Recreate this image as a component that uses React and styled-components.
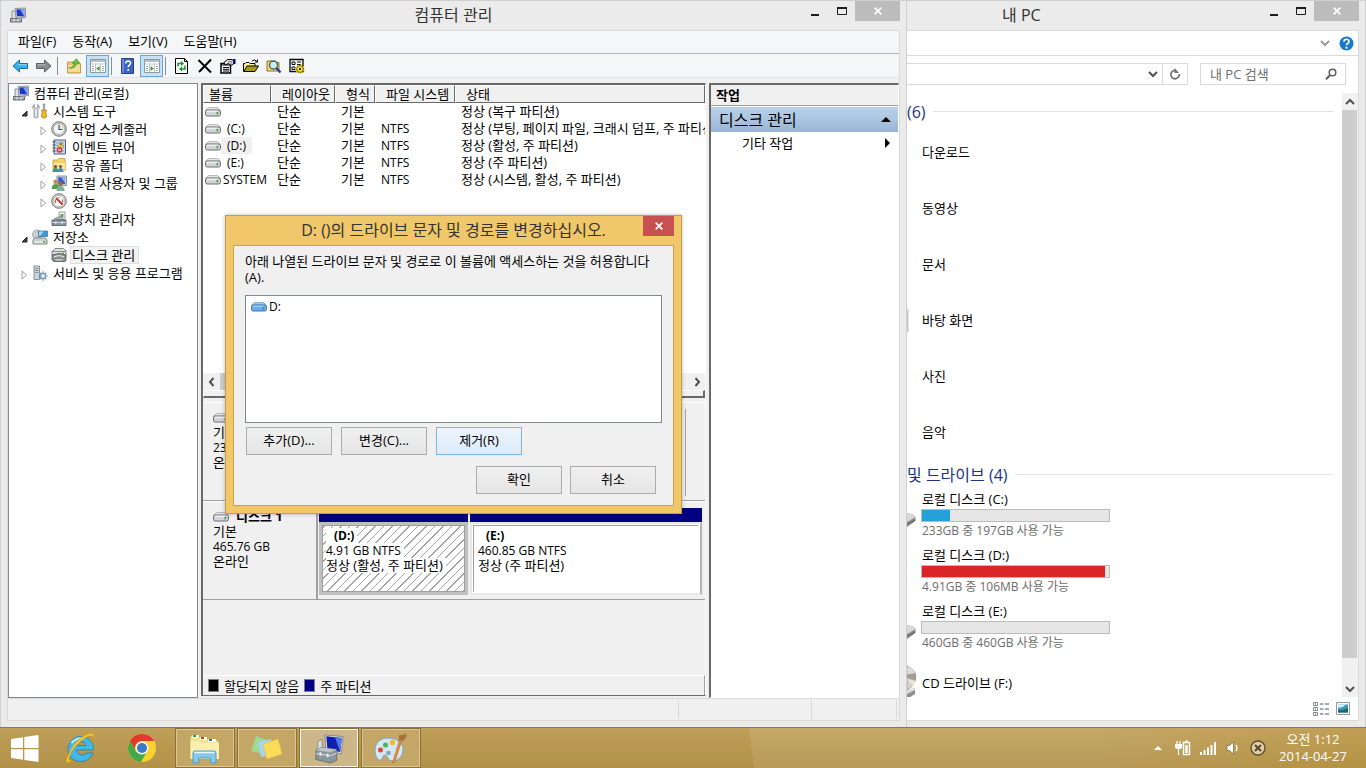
import React from "react";
import styled, { createGlobalStyle, css } from "styled-components";

const GlobalStyle = createGlobalStyle`
  * {
    box-sizing: border-box;
  }

  body {
    margin: 0;
    font-family: "Open Sans", "Noto Sans CJK KR", sans-serif;
    font-size: 13px;
    line-height: 18px;
    color: #000;
    background: #ebebeb;
  }

  button,
  input {
    margin: 0;
    padding: 0;
    border: none;
    background: none;
    font: inherit;
    color: inherit;
  }

  h1, h2, p, ul {
    margin: 0;
    padding: 0;
    font-weight: 400;
    font-size: inherit;
  }

  ul {
    list-style: none;
  }
`;

const Screen = styled.div`
  display: flex;
  flex-direction: column;
  height: 100vh;
  overflow: hidden;
`;

const Desktop = styled.main`
  position: relative;
  flex: 1;
  min-height: 0;
  display: grid;
  grid-template-columns: 907fr 459fr;
`;

/* ---------- window frame ---------- */

const Window = styled.section`
  display: flex;
  flex-direction: column;
  min-width: 0;
  min-height: 0;
  overflow: hidden;
  padding: 0 6px 6px ${(props) => (props.$behind ? "0" : "6px")};
  border: 1px solid #d0d0d0;
  border-bottom: none;
  border-left-width: ${(props) => (props.$behind ? "0" : "1px")};
  background: #ebebeb;
`;

const TitleBar = styled.header`
  flex: none;
  display: grid;
  grid-template-columns: 1fr auto 1fr;
  height: 29px;
`;

const BehindTitleBar = styled(TitleBar)`
  grid-template-columns: auto 1fr;
  padding-left: 95px;
`;

const TitleIcon = styled.div`
  padding: 6px 0 0 3px;
`;

const WindowTitle = styled.h1`
  font-size: 16px;
  line-height: 28px;
  color: #333;
  white-space: nowrap;
`;

const Controls = styled.div`
  display: flex;
  justify-content: flex-end;
  align-items: flex-start;
`;

const ControlButton = styled.button`
  width: ${(props) => (props.$close ? "45px" : "27px")};
  height: 20px;
  display: flex;
  align-items: center;
  justify-content: center;
  background: ${(props) => (props.$close ? "#bcbcbc" : "transparent")};
`;

const Client = styled.div`
  flex: 1;
  min-height: 0;
  display: flex;
  flex-direction: column;
  border: 1px solid #dadada;
  border-left-width: ${(props) => (props.$behind ? "0" : "1px")};
  background: ${(props) => (props.$behind ? "#fff" : "#f0f0f0")};
`;

/* ---------- menu and toolbar ---------- */

const MenuBar = styled.nav`
  flex: none;
  display: flex;
  gap: 16px;
  height: 23px;
  padding: 0 10px;
  border-bottom: 1px solid #b2b4b7;
  background: #f5f6f7;
`;

const MenuItem = styled.button`
  font-size: 13px;
  line-height: 20px;
  padding-bottom: 2px;
`;

const Toolbar = styled.div`
  flex: none;
  display: flex;
  align-items: center;
  height: 24px;
  padding: 1px 0 0 1px;
  border-bottom: 1px solid #e4e4e4;
  background: #f5f6f7;
`;

const ToolButton = styled.button`
  width: 23px;
  height: 22px;
  display: flex;
  align-items: center;
  justify-content: center;
  ${(props) =>
    props.$active &&
    css`
      margin-left: 1px;
      border: 1px solid #6ba5d9;
      background: #c6e0f6;
    `}
`;

const ToolSeparator = styled.span`
  width: 1px;
  height: 18px;
  margin: 0 4px 0 2px;
  background: #8c8c8c;
`;

/* ---------- panes ---------- */

const Panes = styled.div`
  flex: 1;
  min-height: 0;
  display: grid;
  grid-template-columns: 190px minmax(0, 1fr) 190px;
  gap: 3px;
  padding-top: 5px;
`;

const TreePane = styled.ul`
  border: 1px solid #828790;
  background: #fff;
`;

const TreeRow = styled.li`
  display: flex;
  align-items: center;
  height: 18px;
  padding-left: ${(props) => [4, 10, 29][props.$level]}px;
  white-space: nowrap;
`;

const Expander = styled.button`
  width: 10px;
  height: 10px;
  margin: 3px 3px 0 0;
  display: flex;
`;

const TreeLabel = styled.span`
  margin-left: 4px;
  padding: 0 3px 0 1px;
  line-height: 16px;
  ${(props) =>
    props.$selected &&
    css`
      background: #f2f2f2;
      outline: 1px solid #dedede;
    `}
`;

const CenterPane = styled.div`
  min-height: 0;
  display: flex;
  flex-direction: column;
  border: 2px solid #696969;
  border-width: 2px 1px 1px 2px;
  border-right-color: #fff;
  margin-bottom: 2px;
`;

const VolumeList = styled.div`
  flex: none;
  height: 288px;
  overflow: hidden;
  background: #fff;
`;

const VolumeTable = styled.table`
  width: 100%;
  table-layout: fixed;
  border-collapse: separate;
  border-spacing: 0;
  white-space: nowrap;
`;

const VolumeHead = styled.th`
  width: ${(props) => props.$width};
  height: 18px;
  padding: 0 0 0 ${(props) => (props.$first ? "5px" : "10px")};
  border: 1px solid #696969;
  border-top-color: #fff;
  border-left-color: #fff;
  background: #f0f0f0;
  font-weight: 400;
  font-size: 13px;
  line-height: 16px;
  text-align: left;
`;

const VolumeCell = styled.td`
  height: 17px;
  padding: 0 0 0 6px;
  overflow: hidden;
  font-size: ${(props) => (props.$latin ? "12px" : "13px")};
  line-height: 17px;
`;

const VolumeName = styled.div`
  display: flex;
  align-items: center;
  height: 17px;
  margin-left: -4px;
  font-size: 12px;
`;

const VolumeTag = styled.span`
  padding: 0 ${(props) => (props.$plain ? "2px" : "6px")};
  background: ${(props) => (props.$selected ? "#f0f0f0" : "transparent")};
`;

const HScroll = styled.div`
  flex: none;
  display: flex;
  height: 17px;
  background: #f0f0f0;
`;

const HThumb = styled.div`
  width: 360px;
  background: #cdcdcd;
`;

const ScrollArrow = styled.button`
  width: ${(props) => (props.$wide ? "16px" : "17px")};
  height: 17px;
  display: flex;
  align-items: center;
  justify-content: center;
  margin-left: ${(props) => (props.$end ? "auto" : "0")};
`;

const Splitter = styled.div`
  flex: none;
  height: 8px;
  border: 1px solid #fff;
  border-width: 1px 2px 2px 1px;
  border-bottom-color: #696969;
  border-right-color: #696969;
  background: #f0f0f0;
`;

const DiskArea = styled.div`
  flex: 1;
  min-height: 0;
  background: #f0f0f0;
`;

const DiskRow = styled.div`
  display: grid;
  grid-template-columns: 115px minmax(0, 1fr);
  height: 99px;
  margin-top: ${(props) => (props.$first ? "4px" : "0")};
  border-top: 1px solid #fff;
  border-bottom: 1px solid #a0a0a0;
`;

const DiskLabel = styled.div`
  padding: 7px 0 0 10px;
  border-right: 2px solid #a0a0a0;
  font-size: 13px;
  line-height: 15px;
`;

const DiskName = styled.strong`
  display: flex;
  align-items: center;
  gap: 7px;
  height: 15px;
`;

const LatinText = styled.div`
  font-size: 12px;
`;

const Partitions = styled.div`
  display: grid;
  grid-template-columns: ${(props) => props.$columns};
  gap: 2px;
  padding: 6px 3px 4px 1px;
`;

const EmptyPartition = styled.div`
  border-right: 1px solid #a0a0a0;
`;

const Partition = styled.div`
  display: flex;
  flex-direction: column;
`;

const PartitionBand = styled.div`
  height: 14px;
  background: #000080;
`;

const PartitionBody = styled.div`
  flex: 1;
  display: flex;
  padding: ${(props) => (props.$selected ? "0" : "1px")};
  border: ${(props) => (props.$selected ? "3px solid #c0c0c0" : "2px solid #e8e8e8")};
  border-right-color: ${(props) => (props.$selected ? "#c0c0c0" : "#b4b4b4")};
  background: #fff;
`;

const PartitionInner = styled.div`
  flex: 1;
  padding: ${(props) => (props.$hatched ? "2px 3px" : "2px 4px")};
  border: 1px solid #a0a0a0;
  border-right-color: ${(props) => (props.$hatched ? "#a0a0a0" : "#fff")};
  border-bottom-color: ${(props) => (props.$hatched ? "#a0a0a0" : "#fff")};
  background: ${(props) =>
    props.$hatched
      ? "repeating-linear-gradient(-45deg, #a4a4a4 0 1px, #fff 1px 6px)"
      : "#fff"};
`;

const PartitionText = styled.div`
  width: max-content;
  padding: 0 3px 0 ${(props) => (props.$name ? "8px" : "0")};
  background: #fff;
  font-size: ${(props) => (props.$latin ? "12px" : "13px")};
  font-weight: ${(props) => (props.$name ? 700 : 400)};
  line-height: 15px;
  white-space: nowrap;
`;

const Legend = styled.div`
  flex: none;
  display: flex;
  align-items: center;
  gap: 5px;
  height: 20px;
  padding-left: 5px;
  border-top: 1px solid #fff;
  border-right: 1px solid #a0a0a0;
  background: #f0f0f0;
`;

const Swatch = styled.span`
  width: 11px;
  height: 13px;
  border: 1px solid #808080;
  background: ${(props) => props.$color};
`;

const ActionPane = styled.aside`
  border: 1px solid #fff;
  border-width: 2px 1px 1px 2px;
  border-top-color: #696969;
  border-left-color: #696969;
  background: #fff;
`;

const ActionHeader = styled.h2`
  height: 21px;
  padding-left: 5px;
  border-bottom: 1px solid #a0a0a0;
  background: #f0f0f0;
  font-weight: 700;
  font-size: 13px;
  line-height: 20px;
`;

const ActionGroup = styled.button`
  width: 100%;
  display: flex;
  align-items: center;
  justify-content: space-between;
  height: 26px;
  padding: 0 7px 0 8px;
  border-top: 1px solid #fff;
  background: linear-gradient(#bad2ea, #9ab5d6);
  font-size: 16px;
  line-height: 24px;
`;

const ActionItem = styled.button`
  width: 100%;
  display: flex;
  align-items: center;
  justify-content: space-between;
  height: 22px;
  padding: 0 8px 0 31px;
`;

const StatusBar = styled.footer`
  flex: none;
  display: grid;
  grid-template-columns: 1fr 133px 85px;
  height: 22px;
  padding: 1px 2px 1px 0;
  border-top: 1px solid #d9d9d9;
`;

const StatusCell = styled.span`
  border-right: 1px solid #d9d9d9;
`;

/* ---------- explorer window ---------- */

const RibbonStrip = styled.div`
  flex: none;
  display: flex;
  align-items: center;
  justify-content: flex-end;
  gap: 9px;
  height: 25px;
  padding-right: 4px;
  border-bottom: 1px solid #dadada;
`;

const RoundButton = styled.button`
  display: flex;
`;

const AddressRow = styled.div`
  flex: none;
  display: flex;
  gap: 12px;
  padding: 7px 12px 8px 0;
`;

const AddressBox = styled.div`
  flex: 1;
  display: flex;
  justify-content: flex-end;
  height: 22px;
  border: 1px solid #d9d9d9;
  border-left: none;
`;

const AddressButton = styled.button`
  width: ${(props) => (props.$divided ? "25px" : "18px")};
  display: flex;
  align-items: center;
  justify-content: center;
  border-left: ${(props) => (props.$divided ? "1px solid #d9d9d9" : "none")};
`;

const SearchBox = styled.label`
  display: flex;
  align-items: center;
  width: 146px;
  height: 22px;
  padding: 0 8px 0 9px;
  border: 1px solid #d9d9d9;
`;

const SearchInput = styled.input`
  flex: 1;
  min-width: 0;
  height: 18px;
  padding-bottom: 1px;
  outline: none;

  &::placeholder {
    color: #6d6d6d;
  }
`;

const Browser = styled.div`
  flex: 1;
  min-height: 0;
  display: flex;
`;

const BrowserList = styled.div`
  flex: 1;
  min-width: 0;
  overflow: hidden;
  padding: 4px 8px 0 0;
`;

const GroupHeader = styled.h2`
  display: flex;
  align-items: center;
  gap: 7px;
  height: 27px;
  padding-top: 2px;
  font-size: 16px;
  line-height: 24px;
  color: #1e3287;
  white-space: nowrap;

  &::after {
    content: "";
    flex: 1;
    height: 1px;
    background: #e2e2e2;
  }
`;

const Entry = styled.div`
  display: grid;
  grid-template-columns: 11px 189px;
  column-gap: 3px;
  align-items: center;
  height: 56px;
`;

const EntryEdge = styled.div`
  display: flex;
  align-items: center;
  height: 56px;
  padding-top: ${(props) => (props.$low ? "10px" : "0")};
`;

const EntryText = styled.div`
  padding-left: 1px;
  line-height: 18px;
  white-space: nowrap;
  color: ${(props) => (props.$muted ? "#6d6d6d" : "#000")};
  font-size: ${(props) => (props.$muted ? "12px" : "13px")};
`;

const DriveName = styled(EntryText)`
  line-height: 16px;
  padding-bottom: 2px;
`;

const UsageTrack = styled.div`
  height: 13px;
  border: 1px solid #bcbcbc;
  background: #e6e6e6;
`;

const UsageFill = styled.div`
  height: 11px;
  background: ${(props) => props.$color};
`;

const VScroll = styled.div`
  flex: none;
  display: flex;
  flex-direction: column;
  width: 16px;
  background: #f0f0f0;
`;

const VThumb = styled.div`
  flex: 1;
  margin-bottom: 22px;
  margin-right: 1px;
  background: #cdcdcd;
`;

const ViewSwitch = styled.div`
  flex: none;
  display: flex;
  align-items: center;
  justify-content: flex-end;
  gap: 7px;
  height: 23px;
  padding-right: 8px;
`;

/* ---------- dialog ---------- */

const DialogFrame = styled.section`
  position: absolute;
  top: 215px;
  left: 225px;
  width: 457px;
  padding: 0 7px 7px;
  border: 1px solid #c29c4b;
  background: #f0c869;
  box-shadow: 0 0 4px rgba(0, 0, 0, 0.25);
`;

const DialogTitleBar = styled.header`
  display: grid;
  grid-template-columns: 31px 1fr 31px;
  height: 29px;
`;

const DialogTitle = styled(WindowTitle)`
  text-align: center;
`;

const DialogClose = styled(ControlButton)`
  width: 31px;
  background: #c75050;
`;

const DialogBody = styled.div`
  padding: 7px 11px 11px;
  border: 1px solid #c6a452;
  background: #f0f0f0;
`;

const DialogMessage = styled.p`
  line-height: 16px;
`;

const PathList = styled.ul`
  height: 128px;
  margin: 10px 0 4px;
  padding: 2px 5px;
  border: 1px solid #828790;
  background: #fff;
`;

const PathItem = styled.li`
  display: flex;
  align-items: center;
  gap: 2px;
  height: 17px;
  font-size: 12px;
`;

const ButtonRow = styled.div`
  display: flex;
  gap: ${(props) => (props.$end ? "8px" : "9px")};
  justify-content: ${(props) => (props.$end ? "flex-end" : "flex-start")};
  padding: 0 ${(props) => (props.$end ? "6px" : "0")} 0 1px;
  margin-bottom: ${(props) => (props.$end ? "0" : "11px")};
`;

const PushButton = styled.button`
  width: 86px;
  height: 28px;
  padding-bottom: 2px;
  border: 1px solid ${(props) => (props.$hot ? "#7eb4ea" : "#acacac")};
  background: ${(props) =>
    props.$hot
      ? "linear-gradient(#ecf4fc, #dcecfc)"
      : "linear-gradient(#f0f0f0, #e5e5e5)"};
`;

/* ---------- taskbar ---------- */

const Taskbar = styled.footer`
  flex: none;
  display: flex;
  align-items: stretch;
  height: 41px;
  border-top: 1px solid #957837;
  background:
    linear-gradient(rgba(255, 255, 255, 0.08), rgba(0, 0, 0, 0.04)),
    linear-gradient(83deg, #b9974a 0 55%, #c0a05a 55% 80%, #bb9746 100%);
`;

const PinnedButton = styled.button`
  width: 62px;
  display: flex;
  align-items: center;
  justify-content: center;
`;

const StartButton = styled(PinnedButton)`
  width: 49px;
`;

const TaskButton = styled(PinnedButton)`
  width: 60px;
  margin-left: 2px;
  border: 1px solid #8c7136;
  background: ${(props) => (props.$active ? "#cdb788" : "#c4a667")};
  box-shadow: inset 0 0 0 1px ${(props) => (props.$active ? "#fdf8ea" : "#dcc794")};
`;

const Tray = styled.div`
  display: flex;
  align-items: center;
  margin-left: auto;
`;

const TrayButton = styled.button`
  width: 25px;
  height: 24px;
  display: flex;
  align-items: center;
  justify-content: center;
`;

const Clock = styled.time`
  width: 96px;
  padding-right: 10px;
  color: #fff;
  line-height: 17px;
  text-align: center;
`;

/* ---------- icons ---------- */

const Svg = ({ size = 16, width, height, box = 16, children }) => (
  <svg
    width={width || size}
    height={height || size}
    viewBox={typeof box === "string" ? box : `0 0 ${box} ${box}`}
    aria-hidden="true"
  >
    {children}
  </svg>
);

const ComputerIcon = () => (
  <Svg>
    <path d="M2 4h4v8H2z" fill="#dfe3e6" stroke="#767c80" strokeWidth=".8" />
    <path d="M5 1.500 15.500 1v9.500L6 10z" fill="#d8dce0" stroke="#7d8388" strokeWidth=".8" />
    <path d="M6.300 2.600 14.300 2v7.400L7 9z" fill="#1f36c8" />
    <path d="M10 2.400 14.300 2v7.400z" fill="#7fa5f2" />
    <path d="M.5 11.500h11v3.500H.5z" fill="#8d979e" stroke="#4d565c" strokeWidth=".8" />
    <path d="M1 13h10M4 11.500v3.500M8 11.500v3.500" stroke="#e5eaed" strokeWidth=".8" />
    <path d="M9 10.500h4v1.500H9z" fill="#9ba1a6" />
  </Svg>
);

const ToolsIcon = () => (
  <Svg>
    <path d="M2.300 1.500v3l1.700 1 1.700-1v-3c2 1 2 4 .2 5V14q-1.900 2-3.800 0V6.500c-1.800-1-1.800-4 .2-5z" fill="#e6e8ea" stroke="#777" strokeWidth=".8" />
    <path d="M11 1h2l-.5 6h-1z" fill="#b4b8bc" stroke="#777" strokeWidth=".5" />
    <path d="M9.500 7h5l-.6 2 .6 5q-2.500 2.500-5 0l.6-5z" fill="#f3b71f" stroke="#a97708" strokeWidth=".7" />
  </Svg>
);

const ClockIcon = () => (
  <Svg>
    <circle cx="8" cy="8" r="7.300" fill="#c8c8c8" stroke="#6e6e6e" strokeWidth=".9" />
    <circle cx="8" cy="8" r="5.500" fill="#f1f5fa" stroke="#9a9a9a" strokeWidth=".6" />
    <path d="M8 8V3a5 5 0 0 1 5 5z" fill="#f4dd9d" opacity=".7" />
    <path d="M8 3.800V8.500h3.600" fill="none" stroke="#375e8c" strokeWidth="1.200" />
  </Svg>
);

const EventIcon = () => (
  <Svg>
    <path d="M3 1h11.500v14H3z" fill="#c7d8f0" stroke="#4b5f92" />
    <path d="M5 4h8M5 6.500h8M5 9h8M5 12h8" stroke="#6483bd" strokeWidth=".7" />
    <path d="M1.500 3h3M1.500 6h3M1.500 9h3M1.500 12h3" stroke="#444" />
    <path d="m10 2.500 3 5H7z" fill="#fbd22e" stroke="#bc8d00" strokeWidth=".5" />
    <path d="M10 4.200v2" stroke="#222" />
    <circle cx="8.500" cy="11" r="2.800" fill="#e4382d" />
    <path d="m7.500 10 2 2m0-2-2 2" stroke="#fff" strokeWidth=".9" />
  </Svg>
);

const SharedFolderIcon = () => (
  <Svg>
    <path d="M2 3h5l1-1.500h6V13H2z" fill="#f7d76d" stroke="#c79b29" strokeWidth=".8" />
    <path d="M2.500 5h12v8h-12z" fill="#fbe69b" stroke="#d8b04c" strokeWidth=".6" />
    <circle cx="4.500" cy="9.500" r="1.600" fill="#7b4f2b" />
    <path d="M1.500 15q0-4 3-4t3 4z" fill="#3d9a78" />
    <circle cx="9.500" cy="9.500" r="1.600" fill="#8b5a33" />
    <path d="M6.800 15q0-4 2.700-4t3 4z" fill="#418fca" />
  </Svg>
);

const UsersIcon = () => (
  <Svg>
    <path d="M6 1h9.500v9.500H6z" fill="#dbe0e4" stroke="#747b84" strokeWidth=".8" />
    <path d="M7.200 2.200h7v7h-7z" fill="#3358d0" />
    <path d="m10 2.200 4.200 0v6z" fill="#8cb2f4" />
    <circle cx="4.500" cy="6.800" r="2.200" fill="#bf8a57" />
    <path d="M.8 14q0-5 3.800-5t3.800 5z" fill="#559f54" />
    <circle cx="9.500" cy="8.500" r="2.200" fill="#9a6a3d" />
    <path d="M5.600 16q0-5 3.900-5t4.200 5z" fill="#7fae9b" />
  </Svg>
);

const PerformanceIcon = () => (
  <Svg>
    <circle cx="8" cy="8" r="7.300" fill="#d8d8d8" stroke="#6a6a6a" strokeWidth=".9" />
    <circle cx="8" cy="8" r="5.600" fill="#fff" stroke="#888" strokeWidth=".5" />
    <path d="m5 5 6.500 6.500" stroke="#d12b22" strokeWidth="1.800" />
    <path d="M4.300 10V6.500M8 5V3.700m3.700 5.700V6.500" stroke="#c5342a" />
  </Svg>
);

const DeviceIcon = () => (
  <Svg>
    <path d="M8 1h6v9H8z" fill="#f2f4f5" stroke="#868c90" strokeWidth=".8" />
    <path d="M9.500 3h3v3h-3z" fill="#5aa853" />
    <path d="m3 8 4-2h4l2 3z" fill="#b6bec5" stroke="#6b7378" strokeWidth=".7" />
    <path d="M1 9h14v5.500H1z" fill="#8794a0" stroke="#4f5c66" strokeWidth=".8" />
    <path d="M1 11.500h14" stroke="#dce3e8" strokeWidth=".8" />
    <path d="M4 10.500h1.500v2H4zm6.500 0H12v2h-1.500z" fill="#eef1f3" />
  </Svg>
);

const StorageIcon = () => (
  <Svg>
    <circle cx="5" cy="5.500" r="4.500" fill="#ced3d6" stroke="#858b8f" strokeWidth=".7" />
    <circle cx="5" cy="5.500" r="1.300" fill="#fff" stroke="#858b8f" strokeWidth=".5" />
    <path d="M6.500 2h9v5.500h-9z" fill="#2c9ddb" stroke="#4b6f85" strokeWidth=".7" />
    <path d="M7 2.500h5l-4 4.500H7z" fill="#9fdaf5" />
    <path d="M2.500 9h11l1.500 2v4H1v-4z" fill="#e3e5e7" stroke="#5e6568" strokeWidth=".8" />
    <path d="M1 11h14" stroke="#9aa0a3" strokeWidth=".6" />
    <path d="M11 12h2.500v1.500H11z" fill="#42b02c" />
  </Svg>
);

const DiskManageIcon = () => (
  <Svg>
    <path d="m2 4 2-2.500h8.500L15 4v4.500H1V4z" fill="#dedfdf" stroke="#6b6d6e" strokeWidth=".8" />
    <path d="M1 4.500h14" stroke="#8b8d8e" />
    <path d="M1 8q7-3 14 0v5.500q-2 2-4 1H3q-2-1-2-2z" fill="#8b8d8e" stroke="#505253" strokeWidth=".8" />
    <path d="M3 10q5-2.500 10 0" fill="none" stroke="#ececec" strokeWidth="1.200" />
    <path d="M4.500 12h7v1.800h-7z" fill="#c5c8c8" />
    <path d="M11 5.500h2v1.500h-2z" fill="#4bbc3c" />
  </Svg>
);

const ServicesIcon = () => (
  <Svg>
    <path d="M2 1h5.500v13.500H2z" fill="#ccd5da" stroke="#6f7c84" strokeWidth=".8" />
    <path d="M3.300 3.500h3M3.300 5.500h3M3.300 7.500h3" stroke="#6a7a85" strokeWidth=".8" />
    <circle cx="11" cy="11" r="3" fill="#a9c9e4" stroke="#7397b6" />
    <path d="M11 6.300v2m0 5.400v2m-4.700-4.700h2m5.400 0h2M7.700 7.700l1.400 1.400m3.800 3.800 1.400 1.400m0-6.600-1.400 1.400m-3.800 3.800-1.400 1.400" stroke="#7397b6" strokeWidth="1.200" />
    <circle cx="11" cy="11" r="1.200" fill="#fff" />
  </Svg>
);

const DriveIcon = ({ blue }) => (
  <Svg width={16} height={10} box="0 0 16 10">
    <path d="M3.500.6h9L15.400 3.200H.6z" fill={blue ? "#a4cdf3" : "#ececec"} stroke={blue ? "#5d94cc" : "#9b9b9b"} strokeWidth=".7" />
    <rect x=".5" y="3" width="15" height="6" rx="1.800" fill={blue ? "#6caae4" : "#d3d3da"} stroke={blue ? "#3f7ab5" : "#6e6e74"} />
    <path d="M2 4.200h11" stroke={blue ? "#b8daf8" : "#fff"} />
    <path d="M11.500 4.800h1.700v2.500h-1.700z" fill={blue ? "#2b9b8e" : "#3fa32f"} />
  </Svg>
);

const ArrowIcon = ({ forward }) => (
  <Svg width={17} height={14} box="0 0 17 14">
    <path
      d={forward ? "M16 7 9.500 1v3.500H1.500v5h8V13z" : "M1 7l6.500-6v3.500h8v5h-8V13z"}
      fill={forward ? "#8c8c8c" : "#3aaeea"}
      stroke={forward ? "#5f5f5f" : "#1c6ea8"}
      strokeWidth="1"
    />
    <path d={forward ? "M2.500 5.800h8" : "M6 5.800h8.500"} stroke={forward ? "#b9b9b9" : "#9be0fb"} />
  </Svg>
);

const UpFolderIcon = () => (
  <Svg>
    <path d="M1.500 4h5l1 1.500h7V15h-13z" fill="#edc774" stroke="#b78b34" strokeWidth=".8" />
    <path d="M2.500 7h11.500v7H2.500z" fill="#f5dc9b" />
    <path d="M3 10q4 0 5.500-5H6L10.500.8 13.500 5H11Q9.500 11 3 10z" fill="#67c93c" stroke="#3b8e1a" strokeWidth=".6" />
  </Svg>
);

const PaneIcon = ({ right }) => (
  <Svg>
    <path d="M.5 1.500h15v13H.5z" fill="#fff" stroke="#8f979f" />
    <path d="M1 2h14v2H1z" fill="#b4bfca" />
    <path d="M1 6h14M10.500 6.500v8M5.500 6.500v8" stroke="#a9b2bb" strokeWidth=".8" />
    <path d="M2 8.500h2M2 10.500h2M2 12.500h2M12 8.500h2M12 10.500h2M12 12.500h2" stroke="#7f93a8" strokeWidth=".8" />
    <path d={right ? "M6.500 8 10 10.500 6.500 13z" : "M9.700 8 6.200 10.500 9.700 13z"} fill="#3ea32c" />
  </Svg>
);

const HelpBookIcon = () => (
  <Svg width={13} height={16} box="0 0 13 16">
    <path d="M.5.500h12v15H.5z" fill="#3c62c8" stroke="#23418f" />
    <path d="M2 1v14" stroke="#93aef0" />
    <path d="M4.800 5.500c0-3.200 5-3.200 4.700-.2-.1 1.500-2.300 1.800-2.300 4" fill="none" stroke="#fff" strokeWidth="1.500" />
    <circle cx="7.200" cy="12" r="1" fill="#fff" />
  </Svg>
);

const RefreshPageIcon = () => (
  <Svg>
    <path d="M1.500.500h9l3 3v12h-12z" fill="#fff" stroke="#000" />
    <path d="M10.500.500v3h3" fill="none" stroke="#000" />
    <path d="M4 8.500v-3h3.500M11 7.500v3.500H7.500" fill="none" stroke="#179428" strokeWidth="1.500" />
    <path d="M7 3v5l3-2.500zM8 8.500v5L5 11z" fill="#179428" />
  </Svg>
);

const DeleteIcon = () => (
  <Svg>
    <path d="M1.500 2 14 14.500M14 1.500 2 14" stroke="#000" strokeWidth="2" />
  </Svg>
);

const PropertiesIcon = () => (
  <Svg>
    <path d="M1 5.500h9.500v9.500H1z" fill="#fff" stroke="#000" strokeWidth="1.500" />
    <path d="M1 7h9M3 9.500h6M3 11.300h6M3 13h6" stroke="#000" />
    <path d="M4 4.500 7.500 1.500H12l3 2.500-2.500 3H10L8.500 5.500 5 7z" fill="#e6e6e6" stroke="#000" />
    <path d="M8 3.500h4M8.500 5h4" stroke="#666" strokeWidth=".7" />
    <path d="M13 1h2.500v5H13z" fill="#101060" />
  </Svg>
);

const OpenFolderIcon = () => (
  <Svg>
    <path d="M.5 13.500V5.500h1.500l1-1h3l1 1h5V8" fill="#f5ee8c" stroke="#000" />
    <path d="M.7 13.500 4 8h11.500l-3.500 5.500z" fill="#a89b1a" stroke="#000" />
    <path d="M9 3q2.500-2.500 5 .5M14.500 1.500V4H12" fill="none" stroke="#000" />
  </Svg>
);

const FindIcon = () => (
  <Svg>
    <path d="M1 3h5l1 1.500h6V13H1z" fill="#efd978" stroke="#8c7519" />
    <circle cx="7.500" cy="7" r="4" fill="#bff0fa" stroke="#555" strokeWidth="1.300" />
    <path d="m10.300 10 4.200 4.500" stroke="#1b3ca3" strokeWidth="2.300" />
  </Svg>
);

const SettingsIcon = () => (
  <Svg>
    <path d="M1 1.500h13v12H1z" fill="#fff" stroke="#000" strokeWidth="1.300" />
    <path d="M3 4h3v2.500H3zM8 4h4M8 6.500h4M3 9h3v2.500H3z" fill="none" stroke="#000" />
    <circle cx="11" cy="11" r="3.500" fill="#f4dc2c" stroke="#4b4200" strokeWidth="1" />
    <circle cx="11" cy="11" r="4" fill="none" stroke="#e2c818" strokeWidth="1.500" strokeDasharray="1.600 1.500" />
    <circle cx="11" cy="11" r="1.100" fill="#000" />
  </Svg>
);

const Triangle = ({ points, width = 10, height = 10, fill = "#000", stroke = "none" }) => (
  <Svg width={width} height={height} box={`0 0 ${width} ${height}`}>
    <polygon points={points} fill={fill} stroke={stroke} />
  </Svg>
);

const Chevron = ({ d, color = "#505050" }) => (
  <Svg size={10} box={10}>
    <path d={d} fill="none" stroke={color} strokeWidth="2" />
  </Svg>
);

const CHEVRONS = {
  left: "M6.500 1 3 5l3.500 4",
  right: "M3.500 1 7 5 3.500 9",
  up: "M1 7l4-4 4 4",
  down: "M1 3l4 4 4-4",
};

const MinimizeGlyph = () => (
  <Svg size={11} box={11}>
    <path d="M2 9h8" stroke="#1c1c1c" strokeWidth="2" />
  </Svg>
);

const MaximizeGlyph = () => (
  <Svg width={11} height={9} box="0 0 11 9">
    <path d="M1.500 0v7.500h9V0" fill="none" stroke="#1c1c1c" />
    <path d="M1 1h10" stroke="#1c1c1c" strokeWidth="2" />
  </Svg>
);

const CloseGlyph = () => (
  <Svg size={8} box={8}>
    <path d="m.7.700 6.600 6.600m0-6.600L.7 7.300" stroke="#fff" strokeWidth="1.700" />
  </Svg>
);

const HelpRoundIcon = () => (
  <Svg size={15} box={15}>
    <circle cx="7.500" cy="7.500" r="7" fill="#1979ca" />
    <path d="M5 5.700c0-3.200 5.300-3.200 5 0-.1 1.700-2.500 1.500-2.500 3.600" fill="none" stroke="#fff" strokeWidth="1.600" />
    <circle cx="7.500" cy="11.700" r="1.100" fill="#fff" />
  </Svg>
);

const ReloadIcon = () => (
  <Svg size={12} box={12}>
    <path d="M7 2.500A4.200 4.200 0 1 0 10.200 6" fill="none" stroke="#707070" strokeWidth="1.700" />
    <path d="M5.500 0v5h4.500z" fill="#707070" />
  </Svg>
);

const MagnifierIcon = () => (
  <Svg size={12} box={12}>
    <circle cx="7.500" cy="4.500" r="3.300" fill="none" stroke="#5c5c5c" strokeWidth="1.500" />
    <path d="M5.200 7 1 11.200" stroke="#5c5c5c" strokeWidth="2" />
  </Svg>
);

const DriveEdge = () => (
  <Svg width={9} height={18} box="0 0 9 18">
    <path d="M0 2 6 3.500 8.500 6v4L0 16z" fill="#8b8b8b" />
    <path d="M0 2 6 3.500 8.500 6 0 11z" fill="#d9d9d9" />
    <path d="M0 13.500 8 9" stroke="#606060" />
  </Svg>
);

const DiscEdge = () => (
  <Svg width={10} height={36} box="0 0 10 36">
    <path d="M0 1a12 13 0 0 1 0 24z" fill="#d5d2d2" stroke="#aaa" />
    <path d="M0 1q8 2 9 11L0 10z" fill="#dedcdc" stroke="#aaa" strokeWidth=".6" />
    <path d="M0 9.500 9 8v8L0 13z" fill="#a39d98" />
    <path d="m0 14 9 2-3 5z" fill="#e9e4d0" />
    <path d="M0 26 8 23v6L0 34z" fill="#8e8e8e" />
    <path d="M0 26 8 23v2L0 29z" fill="#dedede" />
  </Svg>
);

const FolderEdge = () => (
  <Svg width={4} height={30} box="0 0 4 30">
    <path d="M0 5v22h1.500V3z" fill="#c6c6c6" />
  </Svg>
);

const DetailsViewIcon = () => (
  <Svg>
    <path d="M.5 1.500h4v3h-4zM.5 6.500h4v3h-4zM.5 11.500h4v3h-4z" fill="#fff" stroke="#8a8a8a" />
    <path d="M2 3h1M2 8h1M2 13h1M7 3h3.500M12 3h4M7 8h3.500M12 8h4M7 13h3.500M12 13h4" stroke="#44546e" />
  </Svg>
);

const TilesViewIcon = () => (
  <Svg width={14} height={13} box="0 0 14 13">
    <path d="M.5.500h13v12H.5z" fill="#fff" stroke="#8f9ba6" />
    <path d="M2 2.500h10v8H2z" fill="#3b93c6" />
    <path d="M2 2.500h8q-4 4-8 3z" fill="#d2effa" />
    <path d="M2 10.500V8q4 1 10-2v4.500z" fill="#1d6a52" />
  </Svg>
);

const WindowsLogo = () => (
  <Svg width={28} height={27} box="0 0 28 27">
    <path d="M0 4 12 2.300V13H0zM13.300 2.100 27.500 0v13H13.300zM0 14.200h12v10.600L0 23zM13.300 14.200h14.200V27l-14.200-2z" fill="#fff" />
  </Svg>
);

const ExplorerE = () => (
  <Svg width={32} height={32} box={32}>
    <path
      d="M29.500 18H12.500c.5 5 7.500 6.500 9.500 3h7c-2.500 6-7 8.500-12.500 8.500-8 0-12.500-5.500-12.500-12S9 4.500 16.500 4.500C24 4.500 30 10 29.500 18zM12.500 13.500h9.500c-.5-5-9-5-9.500 0z"
      fill="#42b8ea"
      stroke="#1d7eb5"
      strokeWidth=".8"
      fillRule="evenodd"
    />
    <path d="M7.500 11q5-6 13-4.500" fill="none" stroke="#b6ebfb" strokeWidth="2" />
    <path d="M5.500 20C0 30 2 33 9.500 28 4 30 4 27 7.500 20 13 11 24 2.500 28 4c2 .8 1 4-.5 6C32 4 30.500 0 25 1.500 17 4 9 12 5.500 20z" fill="#f6c62c" stroke="#c28d12" strokeWidth=".5" />
  </Svg>
);

const ChromeLogo = () => (
  <Svg size={30} box={30}>
    <circle cx="15" cy="15" r="14" fill="#f9d22d" />
    <path d="M2.900 8A14 14 0 0 1 27.200 8H15a7 7 0 0 0-6.500 9.500z" fill="#df3a2d" />
    <path d="M2.900 8A14 14 0 0 0 14 29l6-10.500a7 7 0 0 1-11.500-.8z" fill="#41a947" />
    <circle cx="15" cy="15" r="6.500" fill="#f5f5f5" />
    <circle cx="15" cy="15" r="5" fill="#3c79c8" />
  </Svg>
);

const FolderStackIcon = () => (
  <Svg width={32} height={32} box={32}>
    <path d="M1 4h9l1 2h7l1 2h9l2 2v17H1z" fill="#f4e294" stroke="#c2a24b" strokeWidth=".8" />
    <path d="M3 3h7v3H3zM11 5h7v3h-7zM19 7h8v3h-8z" fill="#fff" />
    <path d="M4 3h3v2H4z" fill="#22a53b" />
    <path d="M12 5h3v2h-3z" fill="#c94122" />
    <path d="M20 7h3v2h-3z" fill="#2577bd" />
    <path d="M1.500 9h9l2 2h17.500v16h-28.500z" fill="#fbefb0" />
    <path d="M5 19h21l1 2v10h-5.500v-5h-12v5H4V21z" fill="#86c9ec" stroke="#4c9dc9" />
    <path d="M5.500 20.500h20" stroke="#e8f8ff" strokeWidth="1.500" />
  </Svg>
);

const NotesIcon = () => (
  <Svg width={34} height={28} box="0 0 34 28">
    <path d="m6 2 11 4-4 14L1 17z" fill="#9ed996" />
    <path d="M8 8 21 5l3 15-13 3z" fill="#a5d5f0" />
    <path d="m13 10 15-5 4 15-15 5z" fill="#fadc59" stroke="#e6bd35" strokeWidth=".5" />
  </Svg>
);

const ManagementIcon = () => (
  <Svg width={31} height={31} box={34}>
    <path d="M4 9 9 7v10l-5 2z" fill="#d5d9dc" stroke="#777d82" strokeWidth=".8" />
    <path d="m12 2 20 2-2 19-17-4z" fill="#d9dee2" stroke="#6b7278" strokeWidth=".8" />
    <path d="m13.500 3.700 17 1.700-1.800 15.400-14-3.300z" fill="#0f20b0" />
    <path d="m23 4.700 7.500.7-1.800 15.400z" fill="#5077e4" />
    <path d="m2 19 6-3 17 2v12l-7 3-16-4z" fill="#8b959d" stroke="#565f66" strokeWidth=".8" />
    <path d="m2 19 6-3 17 2-7 3z" fill="#bcc4ca" />
    <path d="M2 22.500 18 25l7-3" fill="none" stroke="#e3e8eb" />
    <path d="M6 21h2v4H6zM14 22.500h2v4h-2z" fill="#eef1f3" />
  </Svg>
);

const PaintIcon = () => (
  <Svg width={34} height={32} box="0 0 34 32">
    <path d="M14 6C5 6 1 12 1 18c0 8 4 11 6 10s1-5 4-5 2 6 8 6c7 0 10-7 10-12S24 6 14 6z" fill="#d4e8f4" stroke="#7aa6c4" />
    <circle cx="6.500" cy="18" r="2.500" fill="#dd4b36" />
    <circle cx="11.500" cy="13" r="2.500" fill="#4cb350" />
    <circle cx="18.500" cy="10.500" r="2.700" fill="#f0b929" />
    <circle cx="14.500" cy="21" r="2.300" fill="#86a6bd" />
    <path d="m26 6 2 1.500L21 30l-2.500.500z" fill="#e5903d" stroke="#b06218" strokeWidth=".5" />
    <path d="M25 8q-1-6 2-5 3 .5 5-2 1.500 6-4 8z" fill="#a9713f" />
  </Svg>
);

const BatteryIcon = () => (
  <Svg width={16} height={16} box={16}>
    <path d="M2 1v3M5 1v3M.5 4.500h6v2q0 2-3 2t-3-2zM3.500 8v7" fill="#fff" stroke="#fff" strokeWidth="1.200" />
    <path d="M8.500 2.500h6v12h-6zM10.500 1h2" fill="none" stroke="#fff" strokeWidth="1.500" />
    <path d="M10.300 5h2.400v8h-2.400z" fill="#fff" />
  </Svg>
);

const SignalIcon = () => (
  <Svg width={16} height={13} box="0 0 16 13">
    <path d="M0 10h2v3H0zM3.500 8h2v5h-2zM7 5.500h2V13H7zM10.500 3h2v10h-2zM14 0h2v13h-2z" fill="#fff" />
  </Svg>
);

const SpeakerIcon = () => (
  <Svg width={13} height={14} box="0 0 13 14">
    <path d="M1 4.500h2.500L7.500 1v12L3.500 9.500H1z" fill="#fff" stroke="#6d5829" strokeWidth=".6" />
    <path d="M9.800 4q2.500 3 0 6" fill="none" stroke="#fff" strokeWidth="1.200" />
  </Svg>
);

const BlockedIcon = () => (
  <Svg size={16} box={16}>
    <circle cx="8" cy="8" r="7" fill="#dfd0ad" stroke="#614f29" strokeWidth="1.400" />
    <path d="m5 5 6 6m0-6-6 6" stroke="#57472a" strokeWidth="2" />
  </Svg>
);

/* ---------- data ---------- */

const menus = ["파일(F)", "동작(A)", "보기(V)", "도움말(H)"];

const tree = [
  { level: 0, label: "컴퓨터 관리(로컬)", icon: ComputerIcon },
  { level: 1, label: "시스템 도구", icon: ToolsIcon, state: "open" },
  { level: 2, label: "작업 스케줄러", icon: ClockIcon, state: "closed" },
  { level: 2, label: "이벤트 뷰어", icon: EventIcon, state: "closed" },
  { level: 2, label: "공유 폴더", icon: SharedFolderIcon, state: "closed" },
  { level: 2, label: "로컬 사용자 및 그룹", icon: UsersIcon, state: "closed" },
  { level: 2, label: "성능", icon: PerformanceIcon, state: "closed" },
  { level: 2, label: "장치 관리자", icon: DeviceIcon },
  { level: 1, label: "저장소", icon: StorageIcon, state: "open" },
  { level: 2, label: "디스크 관리", icon: DiskManageIcon, selected: true },
  { level: 1, label: "서비스 및 응용 프로그램", icon: ServicesIcon, state: "closed" },
];

const columns = [
  { label: "볼륨", width: "68px" },
  { label: "레이아웃", width: "64px" },
  { label: "형식", width: "40px" },
  { label: "파일 시스템", width: "80px" },
  { label: "상태", width: "auto" },
];

const volumes = [
  { name: "", fs: "", status: "정상 (복구 파티션)" },
  { name: "(C:)", fs: "NTFS", status: "정상 (부팅, 페이지 파일, 크래시 덤프, 주 파티션)" },
  { name: "(D:)", fs: "NTFS", status: "정상 (활성, 주 파티션)", selected: true },
  { name: "(E:)", fs: "NTFS", status: "정상 (주 파티션)" },
  { name: "SYSTEM", fs: "NTFS", status: "정상 (시스템, 활성, 주 파티션)" },
];

const folders = ["다운로드", "동영상", "문서", "바탕 화면", "사진", "음악"];

const drives = [
  { name: "로컬 디스크 (C:)", usage: "233GB 중 197GB 사용 가능", percent: 15, color: "#26a0da", edge: true },
  { name: "로컬 디스크 (D:)", usage: "4.91GB 중 106MB 사용 가능", percent: 98, color: "#da2626" },
  { name: "로컬 디스크 (E:)", usage: "460GB 중 460GB 사용 가능", percent: 0, color: "#26a0da", edge: true },
];

/* ---------- components ---------- */

const WindowControls = () => (
  <Controls>
    <ControlButton aria-label="최소화">
      <MinimizeGlyph />
    </ControlButton>
    <ControlButton aria-label="최대화">
      <MaximizeGlyph />
    </ControlButton>
    <ControlButton $close aria-label="닫기">
      <CloseGlyph />
    </ControlButton>
  </Controls>
);

const ExpanderMark = ({ state }) =>
  state === "open" ? (
    <Triangle points="8,3 8,8 3,8" fill="#404040" stroke="#262626" />
  ) : (
    <Triangle points="3,1 7.5,5 3,9" fill="#fff" stroke="#a0a0a0" />
  );

function Tree() {
  return (
    <TreePane>
      {tree.map(({ level, label, icon: Icon, state, selected }) => (
        <TreeRow key={label} $level={level}>
          {level > 0 && (
            <Expander aria-label={label} disabled={!state}>
              {state && <ExpanderMark state={state} />}
            </Expander>
          )}
          <Icon />
          <TreeLabel $selected={selected}>{label}</TreeLabel>
        </TreeRow>
      ))}
    </TreePane>
  );
}

function Volumes() {
  return (
    <VolumeList>
      <VolumeTable>
        <thead>
          <tr>
            {columns.map((column, i) => (
              <VolumeHead key={column.label} $width={column.width} $first={i === 0}>
                {column.label}
              </VolumeHead>
            ))}
          </tr>
        </thead>
        <tbody>
          {volumes.map((volume, i) => (
            <tr key={i}>
              <VolumeCell>
                <VolumeName>
                  <DriveIcon />
                  <VolumeTag $plain={volume.name === "SYSTEM"} $selected={volume.selected}>
                    {volume.name}
                  </VolumeTag>
                </VolumeName>
              </VolumeCell>
              <VolumeCell>단순</VolumeCell>
              <VolumeCell>기본</VolumeCell>
              <VolumeCell $latin>{volume.fs}</VolumeCell>
              <VolumeCell>{volume.status}</VolumeCell>
            </tr>
          ))}
        </tbody>
      </VolumeTable>
    </VolumeList>
  );
}

function Disks() {
  return (
    <DiskArea>
      <DiskRow $first>
        <DiskLabel>
          <DiskName>
            <DriveIcon />
            디스크 0
          </DiskName>
          <div>기본</div>
          <LatinText>232.88 GB</LatinText>
          <div>온라인</div>
        </DiskLabel>
        <Partitions $columns="367px">
          <EmptyPartition />
        </Partitions>
      </DiskRow>
      <DiskRow>
        <DiskLabel>
          <DiskName>
            <DriveIcon />
            디스크 1
          </DiskName>
          <div>기본</div>
          <LatinText>465.76 GB</LatinText>
          <div>온라인</div>
        </DiskLabel>
        <Partitions $columns="149fr 232fr">
          <Partition>
            <PartitionBand />
            <PartitionBody $selected>
              <PartitionInner $hatched>
                <PartitionText $name $latin>(D:)</PartitionText>
                <PartitionText $latin>4.91 GB NTFS</PartitionText>
                <PartitionText>정상 (활성, 주 파티션)</PartitionText>
              </PartitionInner>
            </PartitionBody>
          </Partition>
          <Partition>
            <PartitionBand />
            <PartitionBody>
              <PartitionInner>
                <PartitionText $name $latin>(E:)</PartitionText>
                <PartitionText $latin>460.85 GB NTFS</PartitionText>
                <PartitionText>정상 (주 파티션)</PartitionText>
              </PartitionInner>
            </PartitionBody>
          </Partition>
        </Partitions>
      </DiskRow>
    </DiskArea>
  );
}

function ManagementWindow() {
  return (
    <Window>
      <TitleBar>
        <TitleIcon>
          <ComputerIcon />
        </TitleIcon>
        <WindowTitle>컴퓨터 관리</WindowTitle>
        <WindowControls />
      </TitleBar>
      <Client>
        <MenuBar>
          {menus.map((menu) => (
            <MenuItem key={menu}>{menu}</MenuItem>
          ))}
        </MenuBar>
        <Toolbar>
          <ToolButton aria-label="뒤로"><ArrowIcon /></ToolButton>
          <ToolButton aria-label="앞으로"><ArrowIcon forward /></ToolButton>
          <ToolSeparator />
          <ToolButton aria-label="위로"><UpFolderIcon /></ToolButton>
          <ToolButton $active aria-label="콘솔 트리 표시"><PaneIcon /></ToolButton>
          <ToolSeparator />
          <ToolButton aria-label="도움말"><HelpBookIcon /></ToolButton>
          <ToolButton $active aria-label="작업 창 표시"><PaneIcon right /></ToolButton>
          <ToolSeparator />
          <ToolButton aria-label="새로 고침"><RefreshPageIcon /></ToolButton>
          <ToolButton aria-label="삭제"><DeleteIcon /></ToolButton>
          <ToolButton aria-label="속성"><PropertiesIcon /></ToolButton>
          <ToolButton aria-label="열기"><OpenFolderIcon /></ToolButton>
          <ToolButton aria-label="찾기"><FindIcon /></ToolButton>
          <ToolButton aria-label="설정"><SettingsIcon /></ToolButton>
        </Toolbar>
        <Panes>
          <Tree />
          <CenterPane>
            <Volumes />
            <HScroll>
              <ScrollArrow aria-label="왼쪽"><Chevron d={CHEVRONS.left} /></ScrollArrow>
              <HThumb />
              <ScrollArrow $end aria-label="오른쪽"><Chevron d={CHEVRONS.right} /></ScrollArrow>
            </HScroll>
            <Splitter />
            <Disks />
            <Legend>
              <Swatch $color="#000" />
              할당되지 않음
              <Swatch $color="#000080" />
              주 파티션
            </Legend>
          </CenterPane>
          <ActionPane>
            <ActionHeader>작업</ActionHeader>
            <ActionGroup>
              디스크 관리
              <Triangle points="5,0 10,5 0,5" height={5} />
            </ActionGroup>
            <ActionItem>
              기타 작업
              <Triangle points="0,0 5,5 0,10" width={5} />
            </ActionItem>
          </ActionPane>
        </Panes>
        <StatusBar>
          <StatusCell />
          <StatusCell />
          <StatusCell />
        </StatusBar>
      </Client>
    </Window>
  );
}

function ExplorerWindow() {
  return (
    <Window $behind>
      <BehindTitleBar>
        <WindowTitle>내 PC</WindowTitle>
        <WindowControls />
      </BehindTitleBar>
      <Client $behind>
        <RibbonStrip>
          <RoundButton aria-label="리본 확장"><Chevron d={CHEVRONS.down} color="#9a9a9a" /></RoundButton>
          <RoundButton aria-label="도움말"><HelpRoundIcon /></RoundButton>
        </RibbonStrip>
        <AddressRow>
          <AddressBox>
            <AddressButton aria-label="이전 위치"><Chevron d={CHEVRONS.down} /></AddressButton>
            <AddressButton $divided aria-label="새로 고침"><ReloadIcon /></AddressButton>
          </AddressBox>
          <SearchBox>
            <SearchInput type="text" placeholder="내 PC 검색" aria-label="내 PC 검색" />
            <MagnifierIcon />
          </SearchBox>
        </AddressRow>
        <Browser>
          <BrowserList>
            <GroupHeader>(6)</GroupHeader>
            {folders.map((name) => (
              <Entry key={name}>
                <EntryEdge>{name === "바탕 화면" && <FolderEdge />}</EntryEdge>
                <EntryText>{name}</EntryText>
              </Entry>
            ))}
            <GroupHeader>및 드라이브 (4)</GroupHeader>
            {drives.map((drive) => (
              <Entry key={drive.name}>
                <EntryEdge $low>{drive.edge && <DriveEdge />}</EntryEdge>
                <div>
                  <DriveName>{drive.name}</DriveName>
                  <UsageTrack>
                    <UsageFill $color={drive.color} style={{ width: `${drive.percent}%` }} />
                  </UsageTrack>
                  <EntryText $muted>{drive.usage}</EntryText>
                </div>
              </Entry>
            ))}
            <Entry>
              <EntryEdge><DiscEdge /></EntryEdge>
              <EntryText>CD 드라이브 (F:)</EntryText>
            </Entry>
          </BrowserList>
          <VScroll>
            <ScrollArrow $wide aria-label="위로"><Chevron d={CHEVRONS.up} /></ScrollArrow>
            <VThumb />
            <ScrollArrow $wide aria-label="아래로"><Chevron d={CHEVRONS.down} /></ScrollArrow>
          </VScroll>
        </Browser>
        <ViewSwitch>
          <RoundButton aria-label="자세히"><DetailsViewIcon /></RoundButton>
          <RoundButton aria-label="큰 아이콘"><TilesViewIcon /></RoundButton>
        </ViewSwitch>
      </Client>
    </Window>
  );
}

function DriveLetterDialog() {
  return (
    <DialogFrame role="dialog" aria-labelledby="dialog-title">
      <DialogTitleBar>
        <span />
        <DialogTitle id="dialog-title">D: ()의 드라이브 문자 및 경로를 변경하십시오.</DialogTitle>
        <DialogClose aria-label="닫기">
          <CloseGlyph />
        </DialogClose>
      </DialogTitleBar>
      <DialogBody>
        <DialogMessage>
          아래 나열된 드라이브 문자 및 경로로 이 볼륨에 액세스하는 것을 허용합니다
          <br />
          (A).
        </DialogMessage>
        <PathList>
          <PathItem>
            <DriveIcon blue />
            D:
          </PathItem>
        </PathList>
        <ButtonRow>
          <PushButton>추가(D)...</PushButton>
          <PushButton>변경(C)...</PushButton>
          <PushButton $hot>제거(R)</PushButton>
        </ButtonRow>
        <ButtonRow $end>
          <PushButton>확인</PushButton>
          <PushButton>취소</PushButton>
        </ButtonRow>
      </DialogBody>
    </DialogFrame>
  );
}

function DesktopTaskbar() {
  return (
    <Taskbar>
      <StartButton aria-label="시작"><WindowsLogo /></StartButton>
      <PinnedButton aria-label="Internet Explorer"><ExplorerE /></PinnedButton>
      <PinnedButton aria-label="Chrome"><ChromeLogo /></PinnedButton>
      <TaskButton aria-label="파일 탐색기"><FolderStackIcon /></TaskButton>
      <TaskButton aria-label="스티커 메모"><NotesIcon /></TaskButton>
      <TaskButton $active aria-label="컴퓨터 관리"><ManagementIcon /></TaskButton>
      <TaskButton aria-label="그림판"><PaintIcon /></TaskButton>
      <Tray>
        <TrayButton aria-label="숨겨진 아이콘 표시">
          <Triangle points="4,0 8,4 0,4" width={8} height={4} fill="#fff" />
        </TrayButton>
        <TrayButton aria-label="전원"><BatteryIcon /></TrayButton>
        <TrayButton aria-label="네트워크"><SignalIcon /></TrayButton>
        <TrayButton aria-label="볼륨"><SpeakerIcon /></TrayButton>
        <TrayButton aria-label="알림"><BlockedIcon /></TrayButton>
        <Clock>
          오전 1:12
          <br />
          2014-04-27
        </Clock>
      </Tray>
    </Taskbar>
  );
}

export default function App() {
  return (
    <Screen>
      <GlobalStyle />
      <Desktop>
        <ManagementWindow />
        <ExplorerWindow />
        <DriveLetterDialog />
      </Desktop>
      <DesktopTaskbar />
    </Screen>
  );
}
